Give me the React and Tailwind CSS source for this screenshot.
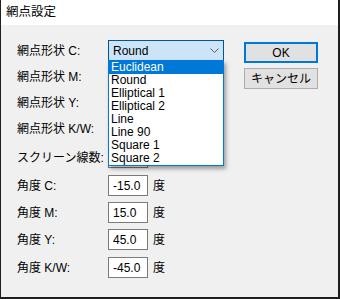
import React from "react";

const font = { fontFamily: '"Liberation Sans","Noto Sans CJK JP",sans-serif' };

function Combo({ value, active }) {
  return (
    <div
      className={
        "w-[116px] h-[21px] flex items-center justify-between pl-[4px] pr-[4px] border " +
        (active ? "bg-[#cce4f7] border-[#005499]" : "bg-[#e1e1e1] border-[#adadad]")
      }
    >
      <span className="leading-none">{value}</span>
      <svg width="9" height="6" viewBox="0 0 9 6" className="mt-[1px]">
        <path d="M0.5 0.5 L4.5 4.5 L8.5 0.5" fill="none" stroke="#606060" strokeWidth="1" />
      </svg>
    </div>
  );
}

function Field({ value, unit }) {
  return (
    <div className="flex items-center">
      <div className="w-[40px] h-[21px] bg-white border border-[#7a7a7a] flex items-center pl-[4px] leading-none">
        {value}
      </div>
      <span className="ml-[5px]">{unit}</span>
    </div>
  );
}

const items = ["Euclidean", "Round", "Elliptical 1", "Elliptical 2", "Line", "Line 90", "Square 1", "Square 2"];

export default function App() {
  return (
    <div
      style={font}
      className="w-[340px] h-[299px] flex flex-col bg-[#f0f0f0] border-l border-r-2 border-b-2 border-[#1f1f1f] text-[12px] text-black"
    >
      <div className="h-[25px] bg-white flex items-center pl-[5px] shrink-0 text-[12.5px]">網点設定</div>
      <div className="flex flex-1">
        <div className="flex flex-col pl-[16px] pt-[15px]">
          <div className="flex items-center h-[21px]">
            <span className="w-[91px]">網点形状 C:</span>
            <div className="relative">
              <Combo value="Round" active />
              <div className="absolute left-0 top-[20px] w-[116px] bg-white border border-[#0078d7] shadow-[2px_3px_4px_rgba(0,0,0,0.35)] z-10">
                {items.map((it, i) => (
                  <div
                    key={it}
                    className={
                      "h-[13px] leading-[13px] pl-[2px] " + (i === 0 ? "bg-[#0078d7] text-white" : "")
                    }
                  >
                    {it}
                  </div>
                ))}
              </div>
            </div>
          </div>
          <div className="flex items-center h-[21px] mt-[5px]">
            <span className="w-[91px]">網点形状 M:</span>
            <Combo value="" />
          </div>
          <div className="flex items-center h-[21px] mt-[5px]">
            <span className="w-[91px]">網点形状 Y:</span>
            <Combo value="" />
          </div>
          <div className="flex items-center h-[21px] mt-[5px]">
            <span className="w-[91px]">網点形状 K/W:</span>
            <Combo value="" />
          </div>
          <div className="flex items-center h-[21px] mt-[8px]">
            <span className="w-[91px]">スクリーン線数:</span>
            <Field value="" unit="lpi" />
          </div>
          <div className="flex items-center h-[21px] mt-[7px]">
            <span className="w-[91px]">角度 C:</span>
            <Field value="-15.0" unit="度" />
          </div>
          <div className="flex items-center h-[21px] mt-[6px]">
            <span className="w-[91px]">角度 M:</span>
            <Field value="15.0" unit="度" />
          </div>
          <div className="flex items-center h-[21px] mt-[6px]">
            <span className="w-[91px]">角度 Y:</span>
            <Field value="45.0" unit="度" />
          </div>
          <div className="flex items-center h-[21px] mt-[7px]">
            <span className="w-[91px]">角度 K/W:</span>
            <Field value="-45.0" unit="度" />
          </div>
        </div>
        <div className="flex flex-col pt-[17px] ml-[20px] gap-[5px]">
          <div className="w-[74px] h-[21px] bg-[#e1e1e1] border-2 border-[#0078d7] flex items-center justify-center">
            OK
          </div>
          <div className="w-[74px] h-[21px] bg-[#e1e1e1] border border-[#adadad] flex items-center justify-center">
            キャンセル
          </div>
        </div>
      </div>
    </div>
  );
}
